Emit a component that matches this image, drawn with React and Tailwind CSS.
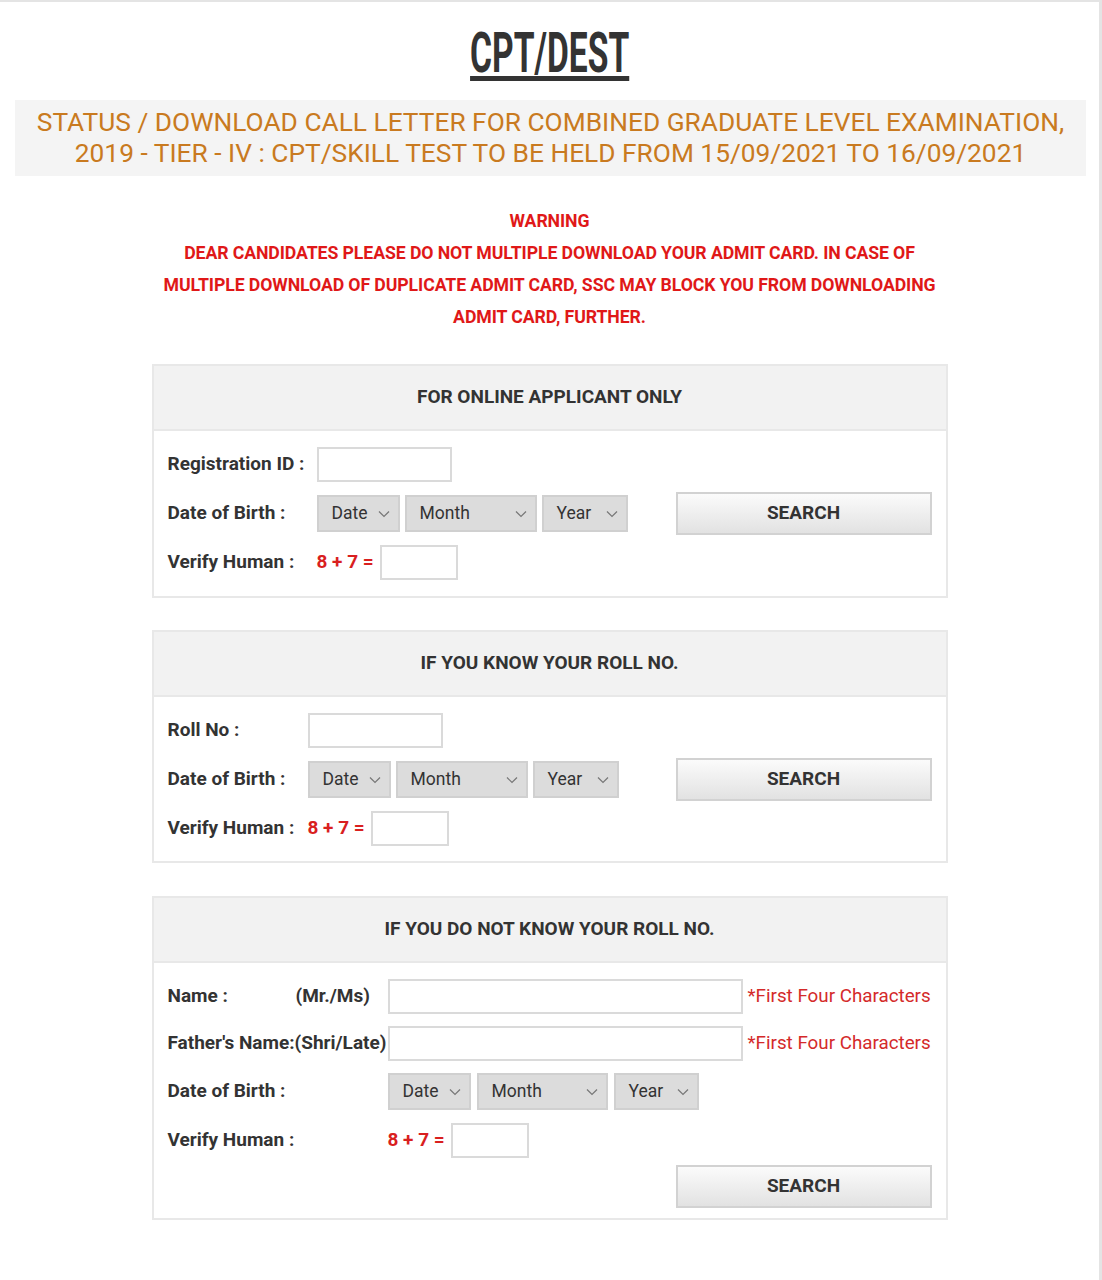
import React from "react";

const Chevron = () => (
  <svg width="12" height="8" viewBox="0 0 12 8" className="shrink-0">
    <polyline points="1,1.5 6,6.5 11,1.5" fill="none" stroke="#777" strokeWidth="1.2" />
  </svg>
);

const Select = ({ label, width }) => (
  <div
    className={`flex h-[37px] items-center justify-between border-2 border-[#d0d0d0] bg-[#dcdcdc] pl-[13px] pr-[8px] text-[17.5px] text-[#333] ${width}`}
  >
    <span>{label}</span>
    <Chevron />
  </div>
);

const DobSelects = () => (
  <div className="flex gap-[5px]">
    <Select label="Date" width="w-[83px]" />
    <Select label="Month" width="w-[132px]" />
    <Select label="Year" width="w-[86px]" />
  </div>
);

const Input = ({ width }) => (
  <div className={`h-[35px] shrink-0 border-2 border-[#dadada] bg-white ${width}`}></div>
);

const SearchButton = () => (
  <button className="h-[43px] w-[256px] border-2 border-[#d2d2d2] bg-gradient-to-b from-[#fbfbfb] to-[#e2e2e2] text-[19px] font-bold text-[#333]">
    SEARCH
  </button>
);

const Captcha = () => (
  <span className="mr-[6px] text-[19px] font-bold text-[#d91f1f]">8 + 7 =</span>
);

const Hint = () => (
  <span className="ml-[5px] shrink-0 whitespace-nowrap text-[18.8px] text-[#d42a2a]">
    *First Four Characters
  </span>
);

const Card = ({ title, children }) => (
  <div className="mx-auto w-[796px] border-2 border-[#e8e8e8] bg-white">
    <div className="flex h-[65px] items-center justify-center border-b-2 border-[#e8e8e8] bg-[#f2f2f2] text-[19px] font-bold text-[#333]">
      {title}
    </div>
    {children}
  </div>
);

const Label = ({ children, width }) => (
  <div className={`shrink-0 whitespace-nowrap text-[19px] font-bold text-[#333] ${width}`}>{children}</div>
);

export default function App() {
  return (
    <div
      className="min-h-[1280px] w-[1102px] border-t-2 border-r-[3px] border-[#e4e4e4] bg-white pb-[60px]"
      style={{ fontFamily: "Roboto, 'Liberation Sans', sans-serif" }}
    >
      {/* Title */}
      <div className="flex h-[98px] items-center justify-center pt-[4px]">
        <h1 className="inline-block origin-center scale-x-[0.6] text-[56px] font-bold leading-none text-[#333] underline decoration-[5px] underline-offset-[4px]">
          CPT/DEST
        </h1>
      </div>

      {/* Exam heading */}
      <div className="ml-[15px] w-[1071px] bg-[#f4f4f4] py-[7px] text-center text-[26.3px] leading-[31px] text-[#c97a20]">
        STATUS / DOWNLOAD CALL LETTER FOR COMBINED GRADUATE LEVEL EXAMINATION,
        <br />
        2019 - TIER - IV : CPT/SKILL TEST TO BE HELD FROM 15/09/2021 TO 16/09/2021
      </div>

      {/* Warning */}
      <div className="mt-[29px] text-center text-[17.7px] font-bold leading-[32px] tracking-[-0.1px] text-[#e01818]">
        <div>WARNING</div>
        <div>DEAR CANDIDATES PLEASE DO NOT MULTIPLE DOWNLOAD YOUR ADMIT CARD. IN CASE OF</div>
        <div>MULTIPLE DOWNLOAD OF DUPLICATE ADMIT CARD, SSC MAY BLOCK YOU FROM DOWNLOADING</div>
        <div>ADMIT CARD, FURTHER.</div>
      </div>

      <div className="mt-[31px] flex flex-col">
        {/* Online applicant */}
        <Card title="FOR ONLINE APPLICANT ONLY">
          <div className="flex items-center justify-between px-[14px] pb-[16px] pt-[16px]">
            <div className="flex flex-col gap-[13px]">
              <div className="flex h-[35px] items-center">
                <Label width="w-[149px]">Registration ID :</Label>
                <Input width="w-[135px]" />
              </div>
              <div className="flex items-center">
                <Label width="w-[149px]">Date of Birth :</Label>
                <DobSelects />
              </div>
              <div className="flex h-[35px] items-center">
                <Label width="w-[149px]">Verify Human :</Label>
                <Captcha />
                <Input width="w-[78px]" />
              </div>
            </div>
            <SearchButton />
          </div>
        </Card>

        {/* Known roll no */}
        <div className="mt-[32px]">
          <Card title="IF YOU KNOW YOUR ROLL NO.">
            <div className="flex items-center justify-between px-[14px] pb-[15px] pt-[16px]">
              <div className="flex flex-col gap-[13px]">
                <div className="flex h-[35px] items-center">
                  <Label width="w-[140px]">Roll No :</Label>
                  <Input width="w-[135px]" />
                </div>
                <div className="flex items-center">
                  <Label width="w-[140px]">Date of Birth :</Label>
                  <DobSelects />
                </div>
                <div className="flex h-[35px] items-center">
                  <Label width="w-[140px]">Verify Human :</Label>
                  <Captcha />
                  <Input width="w-[78px]" />
                </div>
              </div>
              <SearchButton />
            </div>
          </Card>
        </div>

        {/* Unknown roll no */}
        <div className="mt-[33px]">
          <Card title="IF YOU DO NOT KNOW YOUR ROLL NO.">
            <div className="flex flex-col px-[14px] pb-[10px] pt-[16px]">
              <div className="flex h-[35px] items-center">
                <Label width="w-[220px]">
                  <span className="inline-block w-[128px]">Name :</span>(Mr./Ms)
                </Label>
                <Input width="w-[355px]" />
                <Hint />
              </div>
              <div className="mt-[12px] flex h-[35px] items-center">
                <Label width="w-[220px]">Father's Name:(Shri/Late)</Label>
                <Input width="w-[355px]" />
                <Hint />
              </div>
              <div className="mt-[12px] flex items-center">
                <Label width="w-[220px]">Date of Birth :</Label>
                <div className="flex gap-[6px]">
                  <Select label="Date" width="w-[83px]" />
                  <Select label="Month" width="w-[131px]" />
                  <Select label="Year" width="w-[85px]" />
                </div>
              </div>
              <div className="mt-[13px] flex h-[35px] items-center">
                <Label width="w-[220px]">Verify Human :</Label>
                <Captcha />
                <Input width="w-[78px]" />
              </div>
              <div className="mt-[7px] flex justify-end">
                <SearchButton />
              </div>
            </div>
          </Card>
        </div>
      </div>
    </div>
  );
}
